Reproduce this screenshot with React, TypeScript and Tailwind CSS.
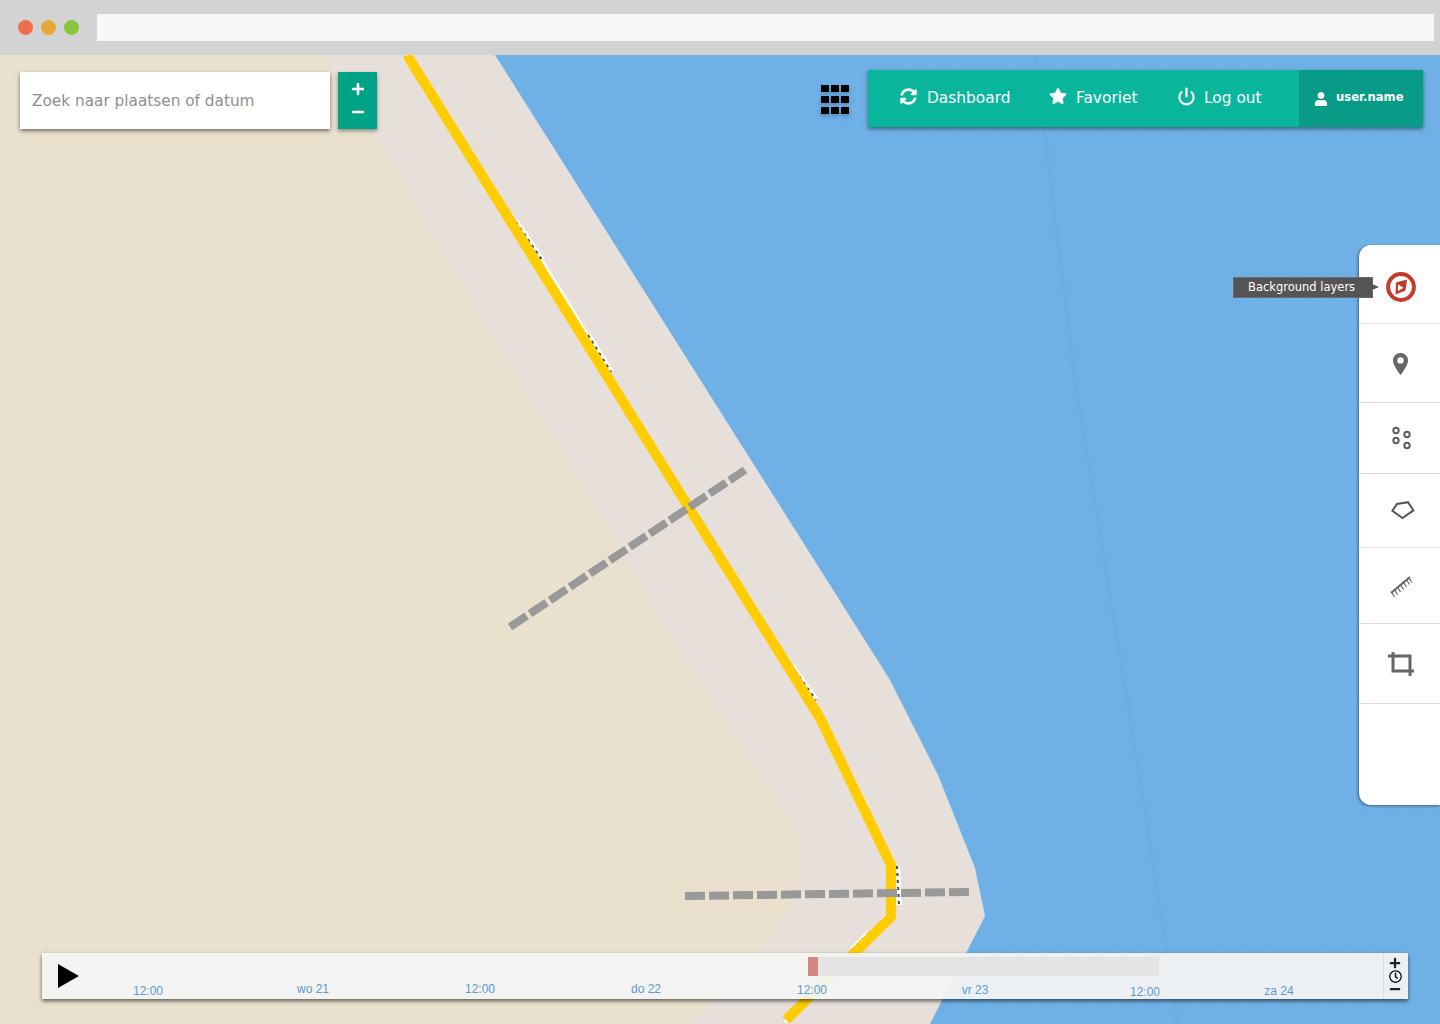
import { FaSyncAlt, FaStar, FaUser, FaRegClock, FaPlus, FaMinus } from "react-icons/fa";
import { FiPower } from "react-icons/fi";

const labels = [
  { t: "12:00", c: "w-[116px] mt-[8px]" },
  { t: "wo 21", c: "w-[214px] mt-[6px]" },
  { t: "12:00", c: "w-[120px] mt-[6px]" },
  { t: "do 22", c: "w-[212px] mt-[6px]" },
  { t: "12:00", c: "w-[120px] mt-[7px]" },
  { t: "vr 23", c: "w-[206px] mt-[7px]" },
  { t: "12:00", c: "w-[134px] mt-[9px]" },
  { t: "za 24", c: "w-[134px] mt-[8px]" },
];

function MapCanvas() {
  const dark = [
    "M516 222L542 260",
    "M588 335L611 372",
    "M679 495L683 502",
    "M791 665L816 700",
    "M897 866L899 905",
    "M852 950L869 933",
    "M404 57L409 61",
  ];
  const white = [
    "M542 260L588 335",
    "M708 545L734 572",
    "M829 730L867 806",
    "M881 921L886 916",
    "M785 1022L788 1019",
  ];
  return (
    <svg className="absolute inset-0 w-full h-full" viewBox="0 55 1440 969">
      <defs>
        <pattern id="waves" width="26" height="9" patternUnits="userSpaceOnUse">
          <rect x="2" y="3" width="14" height="1" fill="#4f93cc" opacity="0.09" />
          <rect x="12" y="7" width="12" height="1" fill="#4f93cc" opacity="0.06" />
        </pattern>
      </defs>
      <rect x="0" y="55" width="1440" height="969" fill="#e7e0da" />
      <path
        d="M0 55L322 55L375 135L500 350L610 530L672 640L800 835L801 870L790 910L750 965L690 1024L0 1024Z"
        fill="#e9e1cd"
      />
      <path d="M495 55L890 680L938 775L975 868L985 916L930 1024L1440 1024L1440 55Z" fill="#6fb1e7" />
      <path d="M495 55L890 680L938 775L975 868L985 916L930 1024L1440 1024L1440 55Z" fill="url(#waves)" />
      <path d="M1035 55L1075 380L1140 780L1178 1024" fill="none" stroke="#69ace1" strokeWidth="3" opacity="0.6" />
      {white.map((d) => (
        <path key={d} d={d} stroke="#ffffff" strokeWidth="3" fill="none" />
      ))}
      {dark.map((d) => (
        <g key={d}>
          <path d={d} stroke="#ffffff" strokeWidth="6" fill="none" />
          <path d={d} stroke="#555555" strokeWidth="2.2" strokeDasharray="3 4" fill="none" />
        </g>
      ))}
      <path
        d="M407 55L820 718L891 865L891 917L786 1020"
        fill="none"
        stroke="#ffcc00"
        strokeWidth="10"
        strokeLinejoin="miter"
      />
      <path d="M510 627L745 470" stroke="#999999" strokeWidth="8" strokeDasharray="20 4" fill="none" />
      <path d="M685 896L969 892" stroke="#999999" strokeWidth="8" strokeDasharray="20 4" fill="none" />
    </svg>
  );
}

function CompassIcon() {
  return (
    <svg width="30" height="30" viewBox="0 0 30 30">
      <circle cx="15" cy="15" r="12.9" fill="none" stroke="#c43b2c" strokeWidth="4" />
      <path d="M10 10.5L21 7.5L19.5 18.5L9.5 22.5Z" fill="#c43b2c" />
      <path d="M12 12.5L17.5 15.8L12 19Z" fill="#ffffff" />
    </svg>
  );
}

function PinIcon() {
  return (
    <svg width="15" height="22" viewBox="0 0 15 22">
      <path
        d="M7.5 0C3.4 0 0 3.3 0 7.4C0 11.5 4.5 18 7.5 22C10.5 18 15 11.5 15 7.4C15 3.3 11.6 0 7.5 0Z"
        fill="#666666"
      />
      <circle cx="7.5" cy="7.4" r="3.2" fill="#ffffff" />
    </svg>
  );
}

function PointsIcon() {
  return (
    <svg width="22" height="26" viewBox="0 0 22 26" fill="none" stroke="#5f5f5f" strokeWidth="2">
      <circle cx="5" cy="5.5" r="2.7" />
      <circle cx="16" cy="9.5" r="2.7" />
      <circle cx="5" cy="15.5" r="2.7" />
      <circle cx="16" cy="20.5" r="2.7" />
    </svg>
  );
}

function PolygonIcon() {
  return (
    <svg width="24" height="19" viewBox="0 0 24 19" fill="none" stroke="#555555" strokeWidth="2">
      <path d="M1.4 9.8L6 3L17 1.2L22.4 9.4L11.4 17Z" />
    </svg>
  );
}

function RulerIcon() {
  return (
    <svg width="24" height="24" viewBox="0 0 24 24" fill="none" stroke="#666666">
      <path d="M2 19L21 3" strokeWidth="2.2" />
      <path
        d="M3 19L5.5 23M6 16.5L8.5 20.5M9 14L11.5 18M12 11.5L14.5 15.5M15 9L17.5 13M18 6.5L20.5 10.5M20.5 4.5L23 8.5"
        strokeWidth="1.2"
      />
    </svg>
  );
}

function CropIcon() {
  return (
    <svg width="26" height="26" viewBox="0 0 26 26" fill="none" stroke="#666666" strokeWidth="3">
      <path d="M5 1V20H26" />
      <path d="M0 5H22V25" />
    </svg>
  );
}

function NavItem({ icon, label, className }: { icon: React.ReactNode; label: string; className: string }) {
  return (
    <div className={"flex items-center text-white text-[15.4px] font-['DejaVu_Sans',sans-serif] " + className}>
      {icon}
      <span className="pt-[4px]">{label}</span>
    </div>
  );
}

export default function App() {
  const squares = Array.from({ length: 9 });
  return (
    <div className="w-[1440px] h-[1024px] flex flex-col overflow-hidden bg-white">
      <div className="h-[55px] shrink-0 bg-[#d3d3d3] flex items-start pt-[14px] pl-[18px] pr-[6px]">
        <div className="flex gap-[8px] mt-[6px]">
          <span className="w-[15px] h-[15px] rounded-full bg-[#ef6e4e]" />
          <span className="w-[15px] h-[15px] rounded-full bg-[#e8a838]" />
          <span className="w-[15px] h-[15px] rounded-full bg-[#85c63c]" />
        </div>
        <div className="ml-[18px] flex-1 h-[27px] bg-[#f7f7f7]" />
      </div>

      <div className="relative flex-1">
        <MapCanvas />
        <div className="absolute inset-0 flex flex-col">
          <div className="flex items-start pl-[20px] pr-[17px] pt-[15px]">
            <div className="flex gap-[8px] mt-[2px]">
              <div className="w-[310px] h-[57px] bg-white shadow-[0_2px_4px_rgba(0,0,0,0.5)] flex items-center pl-[12px] pt-[1px] text-[15.3px] text-[#8f8f8f] font-['DejaVu_Sans',sans-serif]">
                Zoek naar plaatsen of datum
              </div>
              <div className="w-[39px] h-[57px] bg-[#00a386] shadow-[0_2px_4px_rgba(0,0,0,0.4)] flex flex-col items-center pt-[10px] gap-[9px] text-white">
                <FaPlus size={14} />
                <FaMinus size={14} />
              </div>
            </div>
            <div className="ml-auto mr-[19px] mt-[15px] grid grid-cols-3 gap-x-[2px] gap-y-[4px] drop-shadow-[0_2px_2px_rgba(0,0,0,0.25)]">
              {squares.map((_, i) => (
                <span key={i} className="w-[8px] h-[7px] bg-black" />
              ))}
            </div>
            <div className="w-[555px] h-[57px] flex bg-[#09b69b] shadow-[0_2px_4px_rgba(0,0,0,0.45)]">
              <div className="flex-1 flex items-center pl-[32px] pb-[4px]">
                <NavItem
                  className="w-[149px]"
                  icon={<FaSyncAlt size={17} className="mr-[10px]" />}
                  label="Dashboard"
                />
                <NavItem
                  className="w-[128px]"
                  icon={<FaStar size={18} className="mr-[9px]" />}
                  label="Favoriet"
                />
                <NavItem
                  className=""
                  icon={<FiPower size={19} strokeWidth={2.8} className="mr-[8px]" />}
                  label="Log out"
                />
              </div>
              <div className="w-[124px] bg-[#089c86] flex items-center pl-[15px] text-white text-[11.6px] font-bold font-['DejaVu_Sans',sans-serif]">
                <FaUser size={14} className="mr-[8px]" />
                <span className="-mt-[2px]">user.name</span>
              </div>
            </div>
          </div>

          <div className="relative self-end mt-[116px] w-[81px] h-[560px] bg-white rounded-l-[12px] shadow-[-1px_1px_3px_rgba(0,0,0,0.45)]">
            <div className="h-[79px] border-b border-[#dddddd] flex items-center justify-center pt-[6px] pl-[3px]">
              <CompassIcon />
            </div>
            <div className="h-[79px] border-b border-[#dddddd] flex items-center justify-center pt-[2px] pl-[1px]">
              <PinIcon />
            </div>
            <div className="h-[71px] border-b border-[#dddddd] flex items-center justify-center pl-[5px]">
              <PointsIcon />
            </div>
            <div className="h-[74px] border-b border-[#dddddd] flex items-center justify-center pl-[6px]">
              <PolygonIcon />
            </div>
            <div className="h-[76px] border-b border-[#dddddd] flex items-center justify-center pl-[3px]">
              <RulerIcon />
            </div>
            <div className="h-[80px] border-b border-[#dddddd] flex items-center justify-center pl-[3px]">
              <CropIcon />
            </div>
            <div className="absolute left-[-126px] top-[32px] w-[140px] h-[21px] bg-[#555555] border border-[#6a6a6a] flex items-center pl-[14px] pt-[1px] text-white text-[11.5px] font-['DejaVu_Sans',sans-serif]">
              Background layers
              <span className="absolute left-[138px] top-[6px] w-0 h-0 border-y-[3px] border-y-transparent border-l-[7px] border-l-[#555555]" />
            </div>
          </div>

          <div className="mt-auto mb-[25px] ml-[42px] mr-[32px] h-[46px] flex bg-[#f3f3f3]/95 shadow-[0_2px_4px_rgba(0,0,0,0.6)] font-['Liberation_Sans',sans-serif]">
            <div className="w-[48px] pl-[16px] pt-[11px]">
              <div className="w-0 h-0 border-y-[12px] border-y-transparent border-l-[21px] border-l-black" />
            </div>
            <div className="flex-1 flex flex-col pt-[4px]">
              <div className="flex h-[19px] ml-[718px]">
                <span className="w-[10px] bg-[#d5867f]" />
                <span className="w-[341px] bg-[#e3e3e3]" />
              </div>
              <div className="flex text-[12px] leading-[14px] text-[#5a9bd0]">
                {labels.map((l, i) => (
                  <span key={i} className={"text-center shrink-0 " + l.c}>
                    {l.t}
                  </span>
                ))}
              </div>
            </div>
            <div className="w-[25px] border-l border-[#dddddd] flex flex-col items-center justify-between py-[4px] pr-[2px] text-[#222222]">
              <FaPlus size={12} />
              <FaRegClock size={13} className="text-black" />
              <FaMinus size={12} />
            </div>
          </div>
        </div>
      </div>
    </div>
  );
}
